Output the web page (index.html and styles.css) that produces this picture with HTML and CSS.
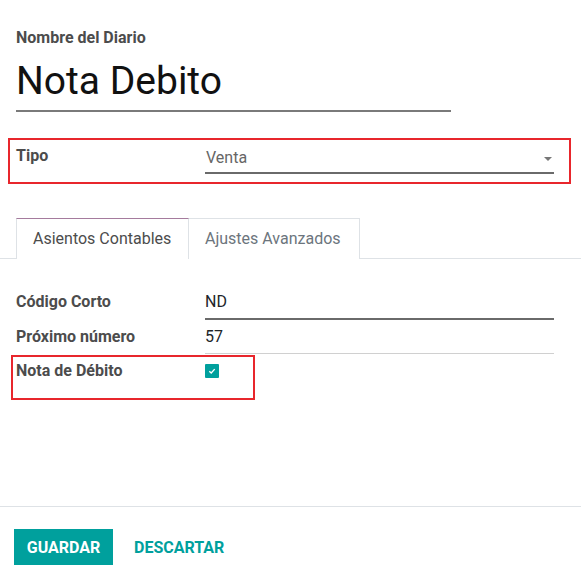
FILE: index.html
```html
<!DOCTYPE html>
<html lang="es">
<head>
<meta charset="utf-8">
<title>Nota Debito</title>
<link rel="stylesheet" href="styles.css">
</head>
<body>
<div class="page">
  <div class="header">
    <div class="label-top">Nombre del Diario</div>
    <div class="title-input">Nota Debito</div>
  </div>

  <div class="tipo-box">
    <div class="field-label">Tipo</div>
    <div class="select">
      <span>Venta</span>
      <span class="caret"></span>
    </div>
  </div>

  <div class="tabs">
    <div class="tab active">Asientos Contables</div>
    <div class="tab">Ajustes Avanzados</div>
  </div>

  <div class="form">
    <div class="field-label row-label">Código Corto</div>
    <div class="value strong-line">ND</div>
    <div class="field-label row-label">Próximo número</div>
    <div class="value light-line">57</div>
    <div class="field-label row-label">Nota de Débito</div>
    <div class="value no-line">
      <span class="checkbox">
        <svg width="8" height="8" viewBox="0 0 8 8"><path d="M1.3 4.2 L3.2 5.9 L6.7 2.1" fill="none" stroke="#fff" stroke-width="1.4"/></svg>
      </span>
    </div>
  </div>

  <div class="footer">
    <button class="btn-primary">GUARDAR</button>
    <button class="btn-link">DESCARTAR</button>
  </div>

  <div class="annot annot-check"></div>
</div>
</body>
</html>
```

FILE: styles.css
```css
* { box-sizing: border-box; }
html, body { margin: 0; padding: 0; background: #fff; }
body {
  font-family: Roboto, "Noto Sans", "Liberation Sans", sans-serif;
  font-size: 16px;
  color: #212529;
}
.page {
  position: relative;
  width: 581px;
  height: 579px;
  overflow: hidden;
}
.header { padding: 28px 16px 0; }
.label-top {
  font-weight: 700;
  font-size: 16px;
  line-height: 20px;
  color: #4c4c4c;
}
.title-input {
  margin-top: 10px;
  width: 435px;
  font-size: 39px;
  line-height: 46px;
  padding-bottom: 6px;
  color: #111;
  border-bottom: 2px solid #7a7a7a;
}
.tipo-box {
  margin: 26px 0 0 8px;
  width: 563px;
  height: 46px;
  border: 2px solid #e8262c;
  padding: 8px 0 0 6px;
  display: grid;
  grid-template-columns: 189px 349px;
  align-items: start;
}
.field-label {
  font-weight: 700;
  line-height: 20px;
  color: #4c4c4c;
}
.tipo-box .field-label { margin-top: -2px; }
.select {
  display: flex;
  justify-content: space-between;
  align-items: center;
  line-height: 20px;
  padding: 0 2px 4px 1px;
  color: #666;
  border-bottom: 2px solid #6a6a6a;
}
.caret {
  width: 0;
  height: 0;
  border-left: 4px solid transparent;
  border-right: 4px solid transparent;
  border-top: 4px solid #777;
  margin-top: 2px;
}
.tabs {
  margin-top: 34px;
  padding-left: 16px;
  display: flex;
  border-bottom: 1px solid #dee2e6;
  height: 41px;
}
.tab {
  height: 41px;
  padding: 10px 16px 0;
  line-height: 20px;
  border: 1px solid #dee2e6;
  border-bottom: none;
  color: #6c757d;
  background: #fff;
}
.tab.active {
  width: 173px;
  color: #4c4c4c;
  border-top-color: #a57b9d;
  padding-left: 16px;
  margin-bottom: -1px;
  height: 41px;
}
.tab + .tab { border-left: none; width: 171px; }
.form {
  margin-top: 31px;
  padding-left: 16px;
  display: grid;
  grid-template-columns: 189px 349px;
  row-gap: 5px;
  align-items: start;
}
.row-label { padding-top: 2px; }
.value {
  line-height: 20px;
  padding: 2px 0 6px;
}
.strong-line { border-bottom: 2px solid #6a6a6a; }
.light-line { border-bottom: 1px solid #d0d0d0; }
.no-line { padding-top: 5px; }
.checkbox {
  display: flex;
  align-items: center;
  justify-content: center;
  width: 14px;
  height: 14px;
  background: #00a09d;
  border-radius: 1px;
}
.checkbox svg { display: block; }
.footer {
  position: absolute;
  left: 0;
  right: 0;
  top: 506px;
  border-top: 1px solid #dee2e6;
  padding: 22px 14px 0;
  display: flex;
  align-items: center;
}
.btn-primary {
  font-family: Roboto, "Noto Sans", sans-serif;
  font-size: 16px;
  font-weight: 700;
  height: 36px;
  width: 99px;
  padding: 0;
  border: 1px solid #00a09d;
  background: #00a09d;
  color: #fff;
}
.btn-link {
  font-family: Roboto, "Noto Sans", sans-serif;
  font-size: 16px;
  font-weight: 700;
  margin-left: 21px;
  padding: 0;
  border: none;
  background: none;
  color: #00a09d;
}
.annot {
  position: absolute;
  border: 2px solid #e8262c;
  pointer-events: none;
}
.annot-check {
  left: 11px;
  top: 355px;
  width: 244px;
  height: 45px;
}
```
